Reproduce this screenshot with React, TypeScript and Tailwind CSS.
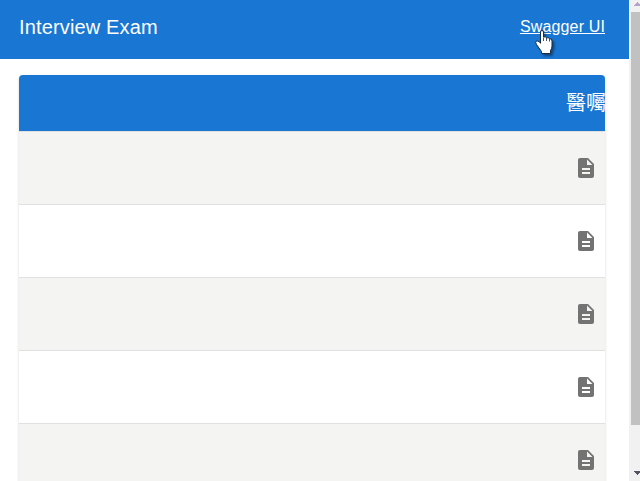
const rows = [1, 2, 3, 4, 5];

function DescriptionIcon() {
  return (
    <svg viewBox="0 0 24 24" className="size-6 fill-[#737373]">
      <path d="M14 2H6c-1.1 0-1.99.9-1.99 2L4 20c0 1.1.89 2 1.99 2H18c1.1 0 2-.9 2-2V8zm2 16H8v-2h8zm0-4H8v-2h8zm-3-5V3.500L18.500 9z" />
    </svg>
  );
}

function HandCursor() {
  return (
    <svg
      viewBox="0 0 20 26"
      className="absolute left-[534px] top-[29px] h-[26px] w-5 drop-shadow-[2px_2px_1px_rgba(0,0,0,0.4)]"
    >
      <path
        d="M6.500 3Q6.500 1.500 8 1.500T9.500 3v5q2.200-.5 3 .8 2.200-.4 3 .9 2.500-.2 2.500 2.300v5q0 2.500-1.500 4.500V24.500H7.500V22.500L2.500 15.500Q1 13 2.300 12.200t3 .8L6.500 14.200z"
        fill="#fff"
        stroke="#182c48"
        strokeWidth="1"
        strokeLinejoin="round"
      />
      <path d="M9.500 8.500v3.500M12.500 9v3M15.500 10v2.500" stroke="#182c48" strokeWidth=".8" />
    </svg>
  );
}

function Scrollbar() {
  return (
    <div className="flex w-[11px] shrink-0 flex-col bg-[#f1f1f1] pl-0.5">
      <svg viewBox="0 0 9 12" className="h-3 w-[9px] shrink-0" shapeRendering="crispEdges">
        <path d="M6 2h1v1h1v1h1v2H3V5h1V4h1V3h1z" fill="#b6a0cc" />
      </svg>
      <div className="h-[413px] bg-[#c1c1c1]" />
      <svg viewBox="0 0 9 12" className="mt-auto mb-1 h-3 w-[9px] shrink-0" shapeRendering="crispEdges">
        <path d="M3 6h6v2H8v1H7v1H6V9H5V8H4V7H3z" fill="#505561" />
      </svg>
    </div>
  );
}

export default function App() {
  return (
    <div className="relative flex h-[481px] w-[640px] overflow-hidden bg-white font-['Liberation_Sans','Noto_Sans_CJK_TC',sans-serif]">
      <main className="min-w-0 flex-1 overflow-hidden">
        <header className="flex h-[59px] items-center justify-between bg-[#1976d2] pr-6 pb-1.5 pl-[19px] text-white">
          <h1 className="text-[20px] leading-6 tracking-[0.15px]">Interview Exam</h1>
          <a href="#" className="text-[16px] leading-6 tracking-[0.15px] underline">Swagger UI</a>
        </header>
        <section className="mt-4 ml-[19px] w-[586px] rounded-t bg-white shadow-[0_1px_3px_rgba(0,0,0,0.16)]">
          <div className="flex h-14 items-center justify-end overflow-hidden rounded-t bg-[#1976d2] text-white">
            <span className="-mr-px text-[20px] leading-6 whitespace-nowrap">醫囑</span>
          </div>
          <div className="border-t border-[#e0e0e0]">
            {rows.map((row) => (
              <div
                key={row}
                className="flex h-[73px] items-center justify-end border-b border-[#e0e0e0] pr-[7px] odd:bg-[#f4f4f3] even:bg-white"
              >
                <DescriptionIcon />
              </div>
            ))}
          </div>
        </section>
      </main>
      <Scrollbar />
      <HandCursor />
    </div>
  );
}
